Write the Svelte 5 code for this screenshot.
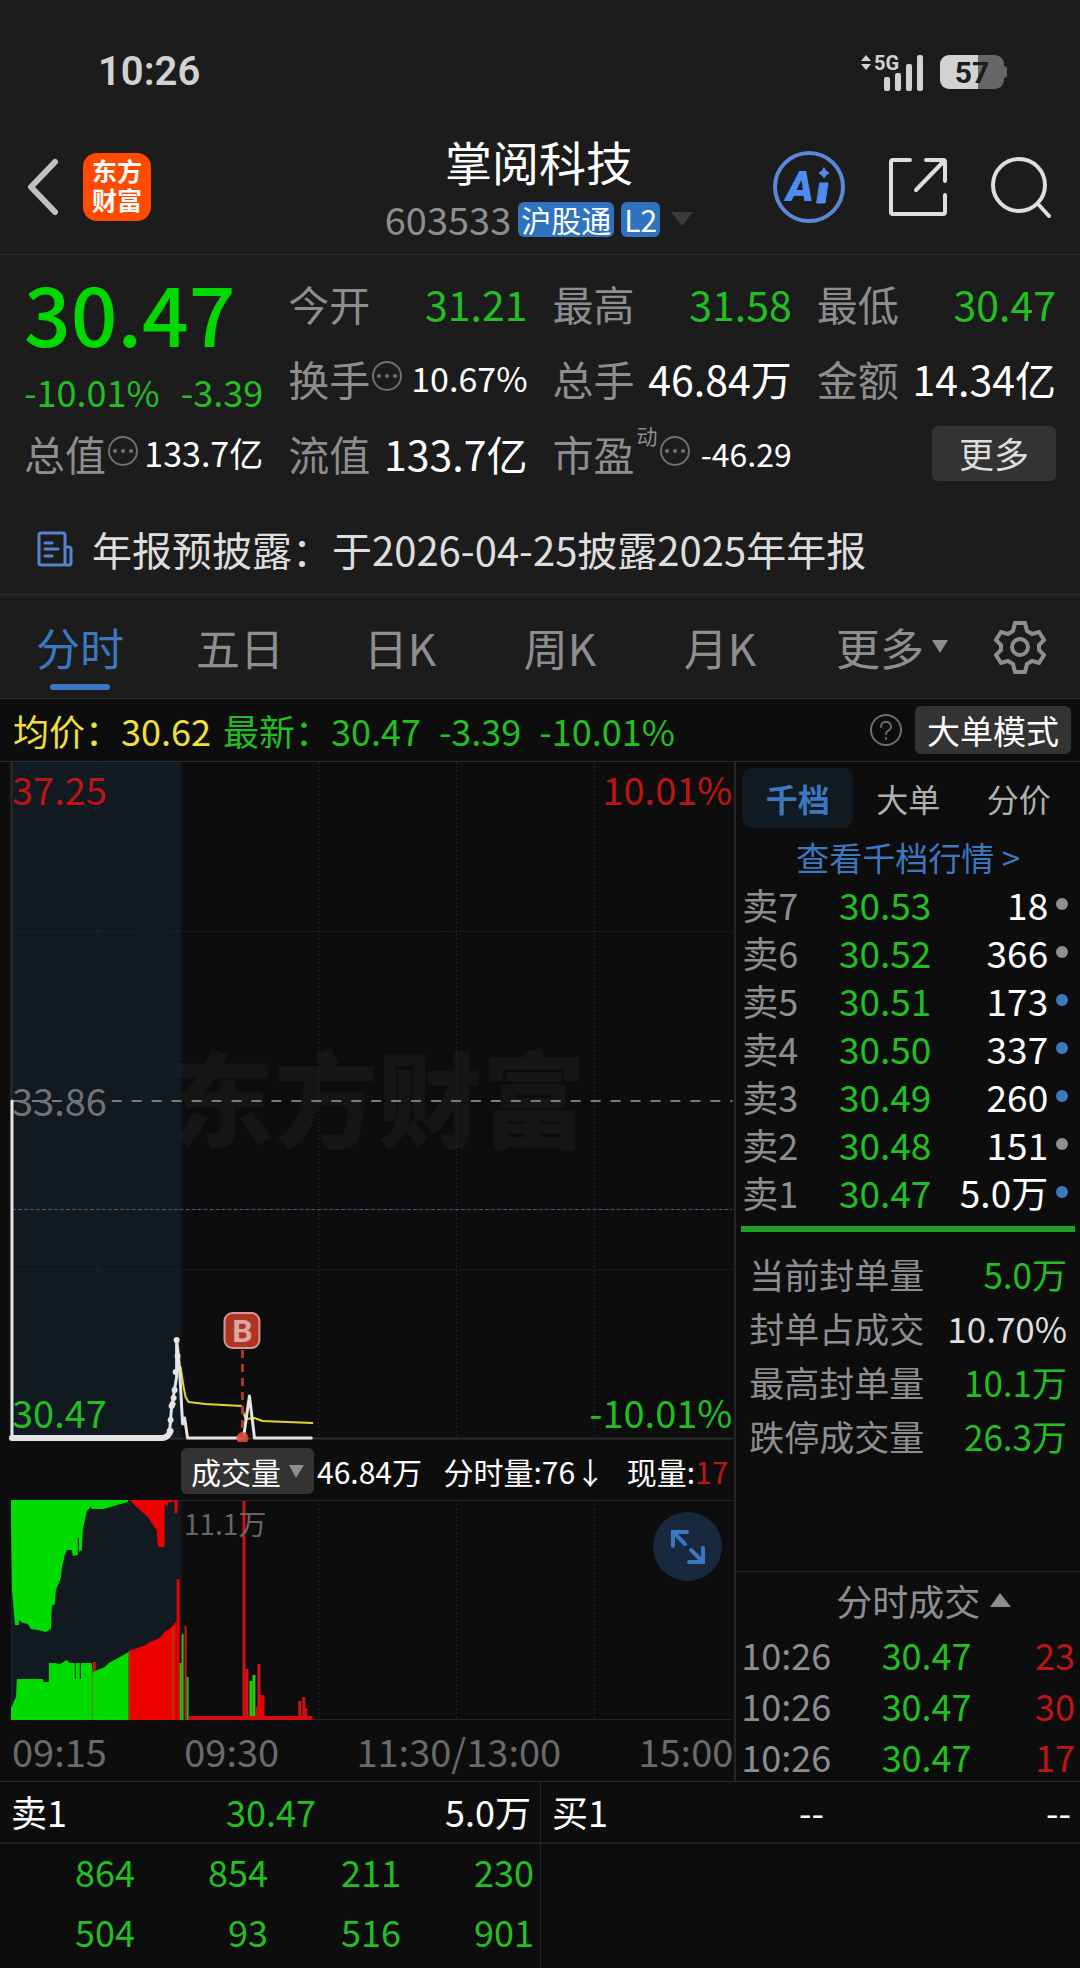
<script lang="ts">
  type Stat = { label: string; value: string; size?: string; green?: boolean; info?: boolean; sup?: string };

  const stats: Stat[] = [
    { label: '今开', value: '31.21', green: true },
    { label: '最高', value: '31.58', green: true },
    { label: '最低', value: '30.47', green: true },
    { label: '换手', value: '10.67%', size: 'mid', info: true },
    { label: '总手', value: '46.84万' },
    { label: '金额', value: '14.34亿' },
    { label: '总值', value: '133.7亿', size: 'mid', info: true },
    { label: '流值', value: '133.7亿' },
    { label: '市盈', value: '-46.29', size: 'small', info: true, sup: '动' }
  ];

  const periods = ['分时', '五日', '日K', '周K', '月K', '更多'];
  let period = $state('分时');

  const sideTabs = ['千档', '大单', '分价'];
  let sideTab = $state('千档');

  const asks = [
    { name: '卖7', price: '30.53', qty: '18', blue: false },
    { name: '卖6', price: '30.52', qty: '366', blue: false },
    { name: '卖5', price: '30.51', qty: '173', blue: true },
    { name: '卖4', price: '30.50', qty: '337', blue: true },
    { name: '卖3', price: '30.49', qty: '260', blue: true },
    { name: '卖2', price: '30.48', qty: '151', blue: false },
    { name: '卖1', price: '30.47', qty: '5.0万', blue: true }
  ];

  const limits = [
    { label: '当前封单量', value: '5.0万', green: true },
    { label: '封单占成交', value: '10.70%', green: false },
    { label: '最高封单量', value: '10.1万', green: true },
    { label: '跌停成交量', value: '26.3万', green: true }
  ];

  const trades = [
    { time: '10:26', price: '30.47', qty: 23 },
    { time: '10:26', price: '30.47', qty: 30 },
    { time: '10:26', price: '30.47', qty: 17 }
  ];

  const queue = [
    [864, 854, 211, 230],
    [504, 93, 516, 901]
  ];

  // call auction dots just before the open
  const dots = [
    [170, 669], [171, 658], [172, 644], [173, 642], [174, 636], [175, 628],
    [176, 610], [178, 594], [177, 578]
  ];

  // volume bars: x, width, top, colour
  const bars: [number, number, number, string][] = [
    [177, 3, 79, '#e80000'],
    [180, 2, 163, '#2fc010'],
    [182, 2, 134, '#2fc010'],
    [185, 2, 126, '#d01414'],
    [187, 2, 177, '#2fc010'],
    [243, 3, 1, '#c81414'],
    [246, 3, 169, '#e01010'],
    [250, 3, 181, '#22cc10'],
    [253, 3, 175, '#22cc10'],
    [256, 2, 207, '#e01010'],
    [258, 3, 164, '#d01414'],
    [260, 5, 195, '#e80000'],
    [299, 3, 201, '#d01414'],
    [303, 3, 197, '#d01414'],
    [306, 2, 208, '#d01414'],
    [189, 124, 216, '#d80c0c']
  ];

  const gridX = [98, 181, 319, 457, 595];
</script>

<div class="page">
  <div class="status">
    <span class="clock">10:26</span>
    <div class="status-right">
      <svg class="signal" viewBox="0 0 64 38" aria-hidden="true">
        <path d="M1 8l5-6 5 6zM1 11l5 6 5-6z" />
        <text x="14" y="17">5G</text>
        <rect x="24" y="24" width="6" height="14" rx="2" />
        <rect x="35" y="20" width="6" height="18" rx="2" />
        <rect x="46" y="11" width="6" height="27" rx="2" />
        <rect x="57" y="2" width="6" height="36" rx="2" />
      </svg>
      <div class="battery"><span>57</span></div>
    </div>
  </div>

  <header>
    <div class="head-left">
      <button class="plain" aria-label="返回">
        <svg width="34" height="58" viewBox="0 0 34 58"><path d="M29 4L5 29l24 25" stroke="#c0c0c0" stroke-width="6" /></svg>
      </button>
      <div class="logo"><span>东方</span><span>财富</span></div>
    </div>
    <div class="head-mid">
      <h1>掌阅科技</h1>
      <div class="sub">
        <span class="code">603533</span>
        <span class="badge">沪股通</span>
        <span class="badge">L2</span>
        <svg width="22" height="14" viewBox="0 0 22 14"><path d="M0 0h22L11 14z" fill="#3a3a3a" stroke="none" /></svg>
      </div>
    </div>
    <div class="head-right">
      <button class="plain" aria-label="智能助手">
        <svg width="74" height="74" viewBox="0 0 74 74">
          <circle cx="37" cy="37" r="34" stroke="#5a87d6" stroke-width="4" />
          <text class="ai" x="14" y="51">A</text>
          <path d="M48 33h8l-3 20h-8z" fill="#4f8cf0" stroke="#4f8cf0" stroke-width="1" />
          <path d="M52 18l2 3 3 2-3 2-2 3-2-3-3-2 3-2z" fill="#4f8cf0" stroke="#4f8cf0" stroke-width="1" />
        </svg>
      </button>
      <button class="plain" aria-label="分享">
        <svg width="60" height="60" viewBox="0 0 60 60" stroke="#dedede" stroke-width="4">
          <path d="M22 3H5a2 2 0 0 0-2 2v50a2 2 0 0 0 2 2h50a2 2 0 0 0 2-2V38M38 3h17a2 2 0 0 1 2 2v19M56 4L28 33" />
        </svg>
      </button>
      <button class="plain" aria-label="搜索">
        <svg width="62" height="62" viewBox="0 0 62 62" stroke="#dedede" stroke-width="4">
          <circle cx="29" cy="29" r="26" /><path d="M48 48l11 12" />
        </svg>
      </button>
    </div>
  </header>

  <section class="quote">
    <div class="last">
      <strong>30.47</strong>
      <div><span>-10.01%</span><span>-3.39</span></div>
    </div>
    {#each stats as s}
      <div class="stat">
        <span class="label">{s.label}</span>
        {#if s.sup}<sup>{s.sup}</sup>{/if}
        {#if s.info}
          <svg class="more-dots" width="32" height="32" viewBox="0 0 32 32">
            <circle cx="16" cy="16" r="14" stroke="#6f6f72" stroke-width="2" />
            <path d="M8 16h.1M16 16h.1M24 16h.1" stroke="#6f6f72" stroke-width="4" />
          </svg>
        {/if}
        <span class="value {s.size ?? ''}" class:green={s.green}>{s.value}</span>
      </div>
    {/each}
    <div class="stat end"><button class="more">更多</button></div>
  </section>

  <a class="notice" href="#notice">
    <svg width="36" height="36" viewBox="0 0 36 36" stroke="#5583cc" stroke-width="3">
      <path d="M28 34H4a2 2 0 0 1-2-2V4a2 2 0 0 1 2-2h22a2 2 0 0 1 2 2v30h4a2 2 0 0 0 2-2V18a2 2 0 0 0-2-2h-4M8 12h7M8 18h13M8 25h7" />
    </svg>
    <span>年报预披露：于2026-04-25披露2025年年报</span>
  </a>

  <nav class="periods">
    {#each periods as p}
      <button class:on={period === p} onclick={() => (period = p)}>
        {p}
        {#if p === '更多'}
          <svg width="16" height="13" viewBox="0 0 16 13"><path d="M0 0h16L8 13z" fill="#8e8e91" stroke="none" /></svg>
        {/if}
      </button>
    {/each}
    <button class="gear" aria-label="设置">
      <svg width="54" height="54" viewBox="0 0 54 54" stroke="#8e8e91" stroke-width="4">
        <path stroke-linejoin="miter" d="M22 3h10l2 8 5 3 7-2 5 8-5 5v5l5 5-5 8-7-2-5 3-2 8H22l-2-8-5-3-7 2-5-8 5-5v-5l-5-5 5-8 7 2 5-3z" />
        <circle cx="27" cy="27" r="8" />
      </svg>
    </button>
  </nav>

  <div class="ticker">
    <span class="avg">均价：30.62</span>
    <span>最新：30.47</span>
    <span>-3.39</span>
    <span>-10.01%</span>
    <svg class="help" width="34" height="34" viewBox="0 0 34 34">
      <circle cx="17" cy="17" r="15" stroke="#6f6f72" stroke-width="2" />
      <path d="M12 14c0-7 10-7 10 0 0 4-5 3-5 7M17 25v1" stroke="#6f6f72" stroke-width="2" />
    </svg>
    <button class="big-order">大单模式</button>
  </div>

  <main>
    <section class="charts">
      <div class="price-chart">
        <div class="watermark">东方财富</div>
        <svg viewBox="0 0 736 680" preserveAspectRatio="none">
          <rect x="12" y="0" width="169" height="676" fill="#1b3450" fill-opacity=".3" />
          {#each gridX as x}
            <path class="grid" d="M{x}.5 0v676" />
          {/each}
          <path class="grid" d="M12 169.5h722M12 507.5h722" />
          <path d="M11.5 0v676M12 676.5h722" stroke="#2c2c2c" stroke-width="2" />
          <path d="M12 339h722" stroke="#7c7c7c" stroke-width="2" stroke-dasharray="10 10" stroke-linecap="butt" />
          <path d="M12 447.5h722" stroke="#33608c" stroke-dasharray="4 2" stroke-linecap="butt" />
          <path d="M181 605l3 20 2 10 3 5 17 2 36 2 4 13 9-1 8 3 50 2" stroke="#e2d52c" stroke-width="2" />
          <path d="M12 339v337" stroke="#e4e4e4" stroke-width="3" />
          <path d="M12 676h151q6-1 8-7" stroke="#e4e4e4" stroke-width="6" />
          <path d="M170 669l2-24 5-30V577l3 30 3 55 2-6 3 20h56l6-42 4 33 1 9h57" stroke="#e4e4e4" stroke-width="3" />
          {#each dots as [x, y]}
            <circle cx={x} cy={y} r="3" fill="#e4e4e4" />
          {/each}
          <path d="M243 588v88" stroke="#a8392f" stroke-width="3" stroke-dasharray="8 6" stroke-linecap="butt" />
          <circle cx="243" cy="676" r="6" fill="#e04a38" fill-opacity=".9" />
          <rect x="225" y="551" width="35" height="35" rx="8" fill="#b03424" stroke="#cf9a94" stroke-width="2" />
          <text class="buy" x="243" y="580">B</text>
        </svg>
        <span class="tl red">37.25</span>
        <span class="tr red">10.01%</span>
        <span class="ml">33.86</span>
        <span class="bl green">30.47</span>
        <span class="br green">-10.01%</span>
      </div>

      <div class="vol-head">
        <button>成交量<svg width="15" height="13" viewBox="0 0 15 13"><path d="M0 0h15L7 13z" fill="#8e8e91" stroke="none" /></svg></button>
        <span>46.84万</span>
        <span class="minute">分时量:76↓</span>
        <span class="now">现量:<b>17</b></span>
      </div>

      <div class="vol-chart">
        <svg viewBox="0 0 736 220" preserveAspectRatio="none">
          <rect x="12" y="0" width="169" height="220" fill="#1b3450" fill-opacity=".3" />
          {#each gridX as x}
            <path class="grid" d="M{x}.5 0v220" />
          {/each}
          <path d="M11.5 0v220M12 .5h722M12 219.5h722" stroke="#262626" />
          <path class="g" d="M11 0V20L12 90l3 35h4v-5l4 3 5 1 3 5 7 1 8 2 5-3 1-23 3-2 1-14 5-12 1-10 3-13 2-5h5l1 6 5-1V38h1v14l3-2 1-20 4-19 4-4 1 2h12l10-3 14-4 1-2z" />
          <path class="r" d="M130 0l7 7 11 10 9 13 1 15 2 2h5V3l2 4 2-5h6v11h3V0z" />
          <path class="g" d="M11 220v-12l5-11 1-18h26l1 3h5v-19h6l5 1 7-4 3 3h5v16h1v-16h4v16h1v-16h11l1 9 12-5 4-4 13-7 7-4v69z" />
          <path class="r" d="M129 220v-69l6-2 11-4 4-3 10-4 5-6 7-5 5-6v99z" />
          <path d="M94.5 162v9" stroke="#c81414" stroke-width="3" stroke-linecap="butt" />
          <path d="M92.5 171v49M129.5 151v69M173.5 127v93" stroke="#7f6a10" />
          {#each bars as [x, w, y, c]}
            <rect {x} {y} width={w} height={220 - y} fill={c} />
          {/each}
        </svg>
        <span class="vol-max">11.1万</span>
        <button class="expand" aria-label="全屏">
          <svg width="36" height="36" viewBox="0 0 36 36" stroke="#3b78c0" stroke-width="4" stroke-linecap="butt">
            <path stroke-linejoin="miter" d="M3 17V3h14M3 3l12 12M33 19v14H19M33 33L21 21" />
          </svg>
        </button>
      </div>

      <div class="axis">
        <span>09:15</span><span>09:30</span><span>11:30/13:00</span><span>15:00</span>
      </div>
    </section>

    <aside>
      <div class="side-tabs">
        {#each sideTabs as t}
          <button class:on={sideTab === t} onclick={() => (sideTab = t)}>{t}</button>
        {/each}
      </div>
      <a class="all" href="#levels">查看千档行情 &gt;</a>
      <table class="asks">
        <tbody>
          {#each asks as a}
            <tr>
              <th scope="row">{a.name}</th>
              <td class="green">{a.price}</td>
              <td>{a.qty}</td>
              <td><i class:blue={a.blue}></i></td>
            </tr>
          {/each}
        </tbody>
      </table>
      <dl>
        {#each limits as l}
          <div><dt>{l.label}</dt><dd class:green={l.green}>{l.value}</dd></div>
        {/each}
      </dl>
      <div class="trades">
        <button>分时成交<svg width="21" height="14" viewBox="0 0 21 14"><path d="M0 14h21L10 0z" fill="#8e8e91" stroke="none" /></svg></button>
        <table>
          <tbody>
            {#each trades as t}
              <tr><td>{t.time}</td><td class="green">{t.price}</td><td class="red">{t.qty}</td></tr>
            {/each}
          </tbody>
        </table>
      </div>
    </aside>
  </main>

  <section class="depth">
    <div class="side">
      <div class="best"><span>卖1</span><span class="green">30.47</span><span>5.0万</span></div>
      <table>
        <tbody>
          {#each queue as row}
            <tr>{#each row as n}<td>{n}</td>{/each}</tr>
          {/each}
        </tbody>
      </table>
    </div>
    <div class="side">
      <div class="best"><span>买1</span><span>--</span><span>--</span></div>
    </div>
  </section>
</div>

<style>
  :global(body) {
    background: #0d0d0d;
  }

  .page {
    --green: #22bf22;
    --red: #c01414;
    --grey: #8e8e91;
    --blue: #3b78c0;
    --line: #2c2c2c;
    font-family: 'Noto Sans CJK SC', 'Noto Sans', sans-serif;
    font-size: 36px;
    line-height: 48px;
    color: #fff;
    overflow: hidden;
  }

  button {
    font: inherit;
    color: inherit;
    background: none;
    border: 0;
    padding: 0;
    cursor: pointer;
  }

  a {
    text-decoration: none;
  }

  svg {
    display: block;
    flex-shrink: 0;
    fill: none;
    stroke-linecap: round;
    stroke-linejoin: round;
  }

  table {
    width: 100%;
    border-collapse: collapse;
    table-layout: fixed;
  }

  th, td {
    padding: 0;
    font-weight: 400;
    text-align: right;
  }

  .green { color: var(--green); }
  .red { color: var(--red); }

  .status {
    display: flex;
    justify-content: space-between;
    align-items: center;
    height: 96px;
    padding: 24px 76px 0 98px;
    background: #1c1c1c;
    color: #d2d2d2;
  }

  .clock {
    font-family: Roboto, sans-serif;
    font-size: 40px;
    font-weight: 600;
  }

  .status-right {
    display: flex;
    align-items: center;
    gap: 16px;
  }

  .signal {
    width: 64px;
    height: 38px;
    fill: #d2d2d2;
  }

  .signal text {
    font: 700 20px Roboto, sans-serif;
  }

  .battery {
    position: relative;
    width: 64px;
    height: 34px;
    border-radius: 9px;
    background: linear-gradient(90deg, #d2d2d2 60%, #666 60%);
    color: #1c1c1c;
    font: 700 30px/36px Roboto, sans-serif;
    text-align: center;
  }

  .battery::after {
    content: '';
    position: absolute;
    left: 64px;
    top: 11px;
    width: 3px;
    height: 12px;
    border-radius: 0 3px 3px 0;
    background: #666;
  }

  header {
    display: grid;
    grid-template-columns: 1fr auto 1fr;
    align-items: center;
    height: 134px;
    padding: 0 28px 0 26px;
    background: #1c1c1c;
    border-bottom: 1px solid var(--line);
  }

  .head-left, .head-right {
    display: flex;
    align-items: center;
  }

  .head-left {
    gap: 23px;
  }

  .head-right {
    justify-content: flex-end;
    gap: 42px;
  }

  .logo {
    display: flex;
    flex-direction: column;
    align-items: center;
    width: 68px;
    height: 68px;
    padding: 3px 0;
    box-sizing: border-box;
    border-radius: 14px;
    background: #ff4a00;
    font-size: 25px;
    font-weight: 700;
    line-height: 29px;
  }

  h1 {
    margin: 0;
    font-size: 47px;
    font-weight: 400;
    line-height: 60px;
    text-align: center;
  }

  .sub {
    display: flex;
    align-items: center;
    gap: 7px;
    height: 52px;
    padding-top: 4px;
    box-sizing: border-box;
  }

  .code {
    color: var(--grey);
    font-size: 38px;
  }

  .badge {
    padding: 0 3px;
    border-radius: 6px;
    background: #2f73c0;
    font-size: 30px;
    line-height: 35px;
  }

  .sub svg {
    margin-left: 4px;
  }

  .ai {
    font: italic 900 42px Roboto, sans-serif;
    fill: #4f8cf0;
  }

  .quote {
    display: grid;
    grid-template-columns: repeat(4, 1fr);
    grid-auto-rows: 75px;
    column-gap: 25px;
    padding: 24px 24px 0;
    background: #1c1c1c;
  }

  .last {
    grid-row: span 2;
    color: var(--green);
  }

  .last strong {
    display: block;
    font-size: 82px;
    font-weight: 500;
    line-height: 66px;
    color: #00d800;
  }

  .last div {
    display: flex;
    justify-content: space-between;
    margin-top: 24px;
    line-height: 44px;
  }

  .stat {
    display: flex;
    align-items: center;
    position: relative;
    height: 48px;
    white-space: nowrap;
  }

  .label {
    color: var(--grey);
    font-size: 41px;
  }

  .stat sup {
    align-self: flex-start;
    margin-left: 2px;
    color: var(--grey);
    font-size: 21px;
    line-height: 12px;
  }

  .more-dots {
    margin: -4px 0 0 1px;
  }

  .value {
    margin-left: auto;
    font-size: 41px;
  }

  .value.mid { font-size: 34px; }
  .value.small { font-size: 32px; }

  .end {
    justify-content: flex-end;
  }

  .more {
    width: 124px;
    height: 55px;
    border-radius: 6px;
    background: #333;
    color: #dedede;
    font-size: 35px;
    line-height: 52px;
  }

  .notice {
    display: flex;
    align-items: center;
    gap: 19px;
    height: 90px;
    padding-left: 37px;
    background: #1c1c1c;
    border-bottom: 1px solid var(--line);
    color: #dedede;
    font-size: 40px;
    white-space: nowrap;
  }

  .periods {
    display: flex;
    height: 103px;
    background: #1c1c1c;
    border-bottom: 1px solid var(--line);
    color: var(--grey);
    font-size: 44px;
  }

  .periods button {
    position: relative;
    display: flex;
    flex: 1;
    align-items: center;
    justify-content: center;
    gap: 8px;
    white-space: nowrap;
  }

  .periods button:not(.gear) svg {
    margin-right: -24px;
  }

  .periods .on {
    color: var(--blue);
  }

  .periods .on::after {
    content: '';
    position: absolute;
    left: 50%;
    bottom: 8px;
    width: 60px;
    height: 6px;
    margin-left: -30px;
    border-radius: 3px;
    background: var(--blue);
  }

  .periods .gear {
    flex: 0 0 120px;
  }

  .ticker {
    display: flex;
    align-items: center;
    gap: 18px;
    height: 62px;
    padding: 0 9px 0 13px;
    border-bottom: 1px solid var(--line);
    color: var(--green);
    white-space: nowrap;
  }

  .avg {
    margin-right: -6px;
    color: #f0e03c;
  }

  .help {
    margin-left: auto;
    margin-right: -6px;
  }

  .big-order {
    height: 48px;
    padding: 0 12px;
    border-radius: 6px;
    background: #333;
    color: #fff;
    font-size: 33px;
  }

  main {
    display: grid;
    grid-template-columns: 15fr 7fr;
    border-bottom: 1px solid var(--line);
  }

  .charts {
    min-width: 0;
    box-sizing: border-box;
    border-right: 2px solid #262626;
  }

  .price-chart, .vol-chart {
    position: relative;
    font-size: 38px;
    line-height: 40px;
  }

  .price-chart > svg {
    position: relative;
    width: 100%;
    height: 680px;
  }

  .price-chart > span {
    position: absolute;
  }

  .tl, .ml, .bl { left: 12px; }
  .tr, .br { right: 2px; }
  .tl, .tr { top: 7px; }
  .ml { top: 318px; color: #737373; }
  .bl, .br { top: 630px; }

  .watermark {
    position: absolute;
    left: 170px;
    top: 281px;
    font-size: 104px;
    font-weight: 900;
    line-height: 104px;
    color: #151515;
  }

  .grid {
    stroke: #262626;
    stroke-dasharray: 2 2;
    stroke-linecap: butt;
  }

  .buy {
    font: 700 32px Roboto, sans-serif;
    fill: #d9a8a2;
    text-anchor: middle;
  }

  .vol-head {
    display: flex;
    align-items: center;
    height: 58px;
    padding: 0 6px 0 181px;
    font-size: 30px;
    white-space: nowrap;
  }

  .vol-head button {
    display: flex;
    align-items: center;
    gap: 8px;
    height: 46px;
    margin-right: 3px;
    padding: 0 10px;
    border-radius: 6px;
    background: #333;
    line-height: 44px;
  }

  .minute, .now {
    margin-left: auto;
  }

  .now b {
    color: var(--red);
    font-weight: 400;
  }

  .vol-chart > svg {
    width: 100%;
    height: 220px;
  }

  .g { fill: #00dc00; }
  .r { fill: #ec0000; }

  .vol-max {
    position: absolute;
    left: 184px;
    top: 3px;
    color: #666;
    font-size: 28px;
  }

  .expand {
    position: absolute;
    right: 12px;
    top: 12px;
    display: grid;
    place-items: center;
    width: 69px;
    height: 69px;
    border-radius: 50%;
    background: #18293f;
  }

  .axis {
    display: flex;
    justify-content: space-between;
    height: 61px;
    padding: 0 1px 0 12px;
    color: #6a6a6a;
    font-size: 38px;
    line-height: 61px;
  }

  aside {
    display: flex;
    flex-direction: column;
    min-width: 0;
  }

  .side-tabs {
    display: flex;
    padding: 6px;
    color: #b0b0b0;
    font-size: 32px;
  }

  .side-tabs button {
    flex: 1;
    height: 60px;
    border-radius: 10px;
  }

  .side-tabs .on {
    background: #111921;
    color: var(--blue);
    font-weight: 700;
  }

  .all {
    color: var(--blue);
    font-size: 33px;
    line-height: 46px;
    text-align: center;
  }

  .asks {
    font-size: 37px;
  }

  .asks tr {
    height: 48px;
  }

  .asks th {
    width: 24%;
    padding-left: 6px;
    color: var(--grey);
    font-size: 36px;
    text-align: left;
  }

  .asks td:nth-child(2) { width: 31%; }
  .asks td:nth-child(3) { width: 34%; }

  .asks i {
    display: block;
    width: 12px;
    height: 12px;
    margin-left: 8px;
    border-radius: 50%;
    background: var(--grey);
  }

  .asks i.blue {
    background: var(--blue);
  }

  dl {
    margin: 10px 5px 0;
    padding: 15px 8px 0;
    border-top: 6px solid #229c22;
    font-size: 35px;
  }

  dl div {
    display: flex;
    justify-content: space-between;
    height: 54px;
    line-height: 54px;
  }

  dt {
    color: var(--grey);
  }

  dd {
    margin: 0;
    color: #dedede;
  }

  dd.green {
    color: var(--green);
  }

  .trades {
    margin-top: auto;
    padding: 0 5px;
    border-top: 1px solid #222;
  }

  .trades button {
    display: flex;
    align-items: center;
    justify-content: center;
    gap: 10px;
    width: 100%;
    height: 56px;
    color: var(--grey);
  }

  .trades button svg {
    margin-right: -31px;
  }

  .trades tr {
    height: 51px;
  }

  .trades td:first-child {
    width: 36%;
    color: var(--grey);
    text-align: left;
  }

  .trades td:nth-child(2) {
    width: 33%;
  }

  .depth {
    display: grid;
    grid-template-columns: 1fr 1fr;
  }

  .side {
    min-height: 186px;
  }

  .side + .side {
    border-left: 1px solid #222;
  }

  .best {
    display: grid;
    grid-template-columns: 1fr auto 1fr;
    height: 60px;
    padding: 0 9px 0 11px;
    border-bottom: 2px solid #202020;
    line-height: 58px;
  }

  .best span:last-child {
    text-align: right;
  }

  .depth table {
    width: calc(100% - 8px);
    margin-left: 8px;
    color: var(--green);
  }

  .depth tr {
    height: 60px;
  }

  .depth td {
    padding: 0 6px 6px 0;
  }
</style>
